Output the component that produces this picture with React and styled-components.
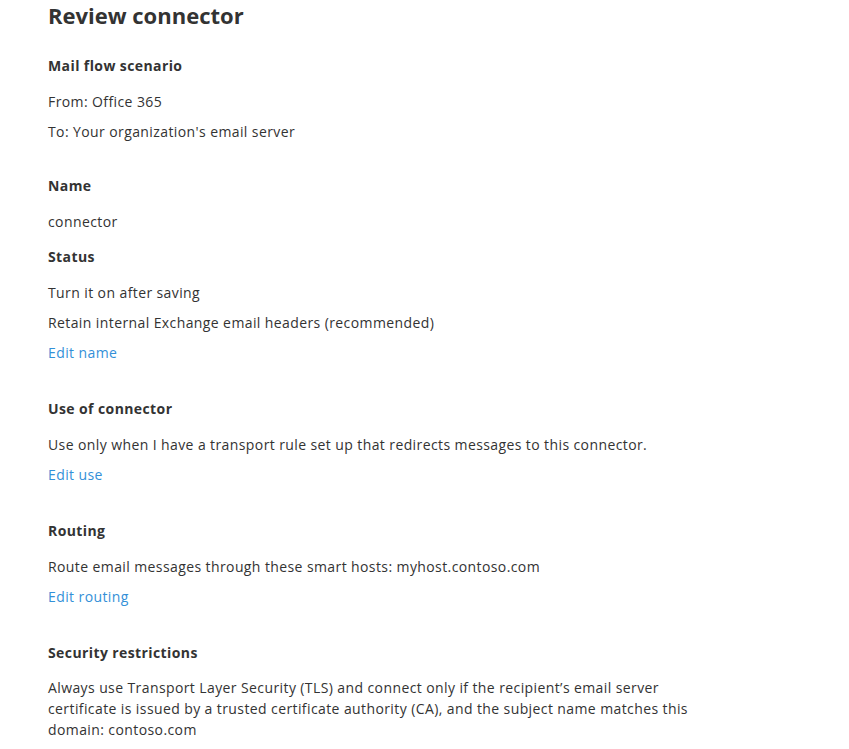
import styled, {createGlobalStyle} from "styled-components";

const GlobalStyle = createGlobalStyle`
	body {
		margin: 0;
		background: #ffffff;
		font-family: "Segoe UI", "Open Sans", "Noto Sans", sans-serif;
		color: #333333;
	}
`

const Page = styled.div`
	padding: 0 48px;
	width: 849px;
	box-sizing: border-box;
`

const Title = styled.h1`
	margin: 0 0 26px;
	font-size: 22px;
	line-height: 30px;
	font-weight: 700;
	color: #333333;
`

const Section = styled.section`
	display: flex;
	flex-direction: column;
	align-items: flex-start;
	margin-top: ${props => props.gap || 0}px;
`

const Heading = styled.h2`
	margin: 0 0 6px;
	font-size: 14px;
	line-height: 20px;
	font-weight: 700;
	letter-spacing: 0.4px;
	color: #333333;
`

const Line = styled.p`
	margin: 10px 0 0;
	font-size: 14px;
	line-height: 20px;
	letter-spacing: 0.4px;
`

const Paragraph = styled.p`
	margin: 8px 0 0;
	font-size: 14px;
	line-height: 21px;
	letter-spacing: 0.4px;
	max-width: 650px;
`

const EditLink = styled.a`
	display: block;
	margin-top: 10px;
	font-size: 14px;
	line-height: 20px;
	letter-spacing: 0.4px;
	color: #3390d8;
	text-decoration: none;
	cursor: pointer;
`

const App = () => {
	return (
		<Page>
			<GlobalStyle/>
			<Title>Review connector</Title>
			<Section>
				<Heading>Mail flow scenario</Heading>
				<Line>From: Office 365</Line>
				<Line>To: Your organization's email server</Line>
			</Section>
			<Section gap={34}>
				<Heading>Name</Heading>
				<Line>connector</Line>
			</Section>
			<Section gap={15}>
				<Heading>Status</Heading>
				<Line>Turn it on after saving</Line>
				<Line>Retain internal Exchange email headers (recommended)</Line>
				<EditLink>Edit name</EditLink>
			</Section>
			<Section gap={36}>
				<Heading>Use of connector</Heading>
				<Line>Use only when I have a transport rule set up that redirects messages to this connector.</Line>
				<EditLink>Edit use</EditLink>
			</Section>
			<Section gap={36}>
				<Heading>Routing</Heading>
				<Line>Route email messages through these smart hosts: myhost.contoso.com</Line>
				<EditLink>Edit routing</EditLink>
			</Section>
			<Section gap={36}>
				<Heading>Security restrictions</Heading>
				<Paragraph>
					Always use Transport Layer Security (TLS) and connect only if the recipient’s email server
					certificate is issued by a trusted certificate authority (CA), and the subject name matches this
					domain: contoso.com
				</Paragraph>
			</Section>
		</Page>
	)
}

export default App
